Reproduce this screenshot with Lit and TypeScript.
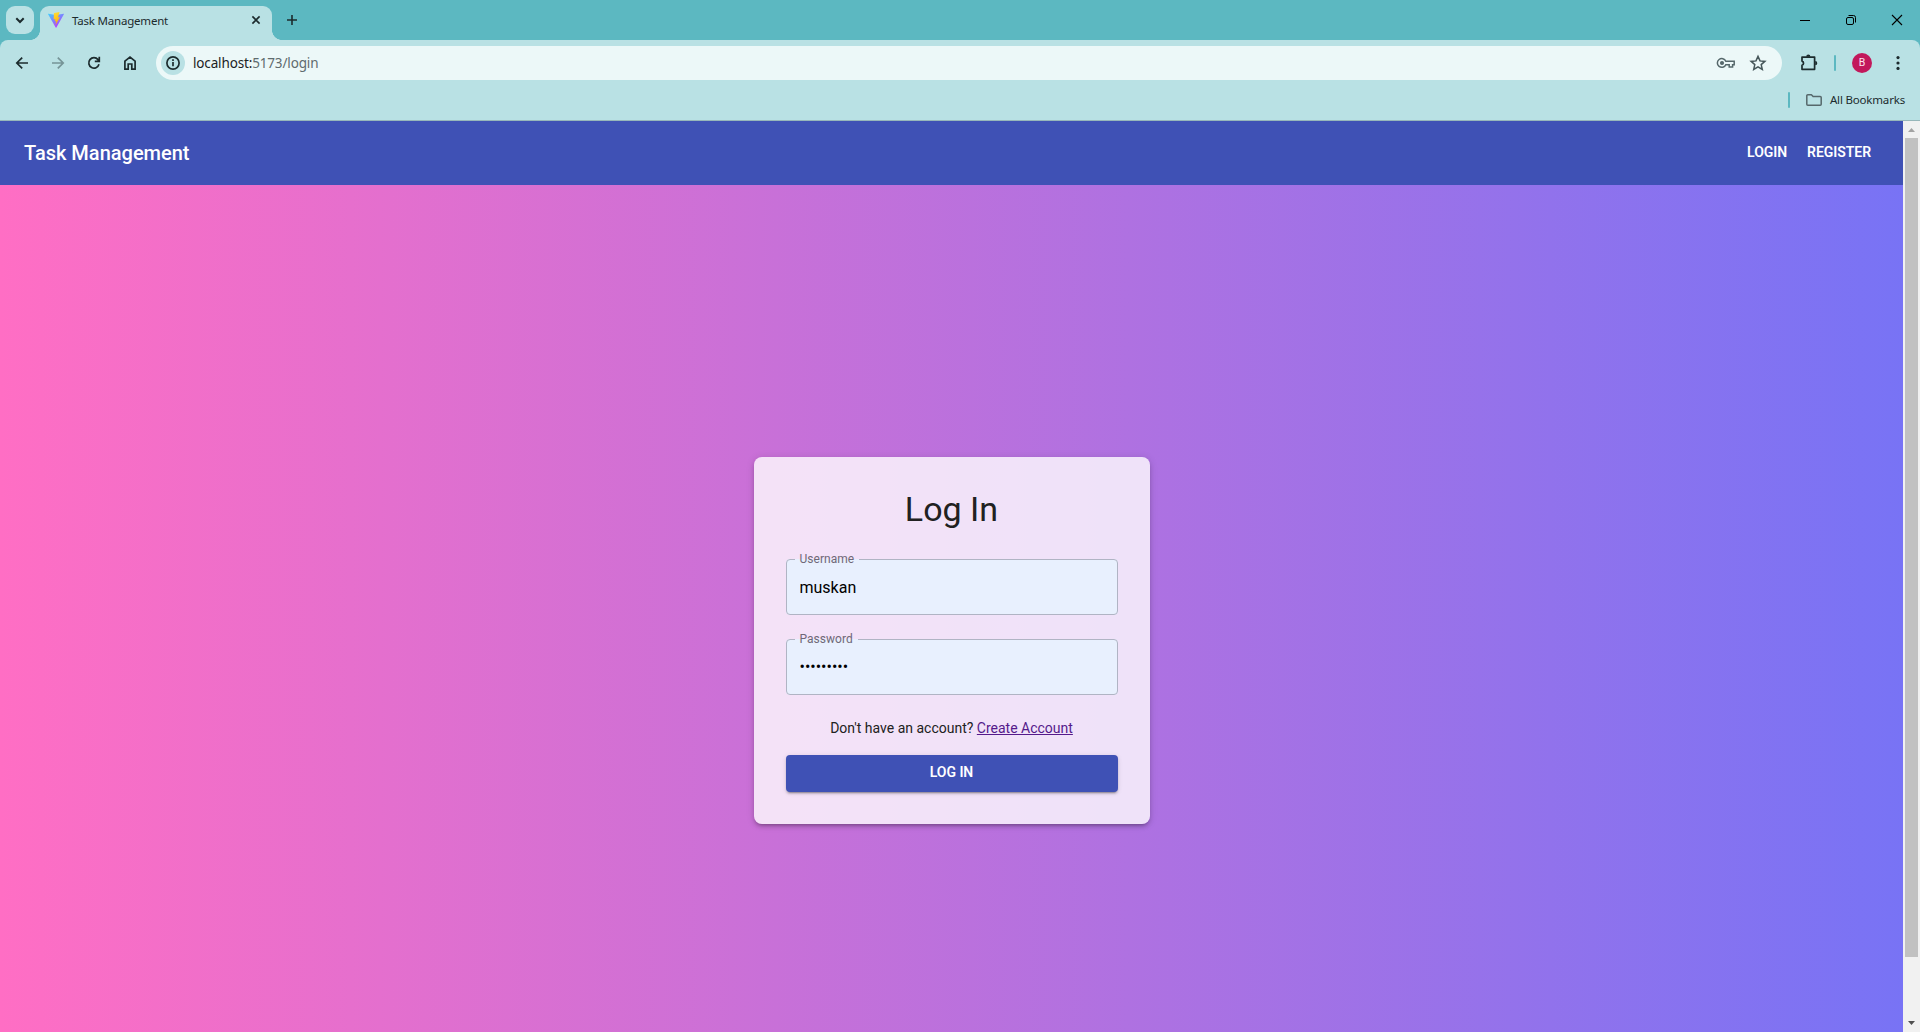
import { LitElement, html, css, svg } from "lit";
import { customElement } from "lit/decorators.js";

@customElement("browser-tabs")
class BrowserTabs extends LitElement {
  static styles = css`
    :host { display: block; height: 40px; background: #5cb8c1; font-family: "Noto Sans", sans-serif; color: #1c2b2d; }
    .strip { display: flex; height: 40px; }
    .search { width: 28px; height: 28px; margin: 6px 0 0 6px; border-radius: 9px; background: #b9e1e4; }
    .tab { position: relative; display: flex; align-items: center; width: 232px; height: 34px; margin: 6px 0 0 6px; border-radius: 9px 9px 0 0; background: #b9e1e4; box-sizing: border-box; padding: 0 8px; }
    .tab::before, .tab::after { content: ""; position: absolute; bottom: 0; width: 10px; height: 10px; }
    .tab::before { left: -10px; background: radial-gradient(circle at 0 0, transparent 9.6px, #b9e1e4 10.2px); }
    .tab::after { right: -10px; background: radial-gradient(circle at 100% 0, transparent 9.6px, #b9e1e4 10.2px); }
    .logo { margin-top: -6px; }
    .title { flex: 1; margin: -4px 0 0 8px; font-size: 11.5px; line-height: 16px; letter-spacing: -0.2px; white-space: nowrap; }
    .close { margin-top: -6px; }
    .plus { margin: 14px 0 0 14px; }
    .window { display: flex; gap: 34px; margin: 14px 17px 0 auto; }
    svg { display: block; flex: none; }
  `;
  render() {
    return html`<div class="strip">
      <div class="search"><svg width="28" height="28" fill="none" stroke="#1c2b2d" stroke-width="2"><path d="M10.3 12.3l3.7 3.7 3.7-3.7"/></svg></div>
      <div class="tab">
        <svg class="logo" width="16" height="16" viewBox="0 0 16 16">
          <defs>
            <linearGradient id="v" x1="0" y1="0" x2=".6" y2="1"><stop offset="0" stop-color="#41d1ff"/><stop offset="1" stop-color="#bd34fe"/></linearGradient>
            <linearGradient id="b" x1=".4" y1="0" x2=".6" y2="1"><stop offset="0" stop-color="#ffdd35"/><stop offset="1" stop-color="#ffa800"/></linearGradient>
          </defs>
          <path fill="url(#v)" d="M15.9 2.3L8.4 15.6a.4.4 0 0 1-.7 0L.1 2.3a.4.4 0 0 1 .4-.6L8 3l7.5-1.3a.4.4 0 0 1 .4.6z"/>
          <path fill="url(#b)" d="M11.5 0L6 1.1l-.4 6.3 1.7-.3-.5 2.4 1.4-.4-.8 4.2 4.6-8.2-2 .4z"/>
        </svg>
        <span class="title">Task Management</span>
        <svg class="close" width="16" height="16" fill="none" stroke="#1c2b2d" stroke-width="1.6"><path d="M4.4 4.4l7.2 7.2M11.6 4.4l-7.2 7.2"/></svg>
      </div>
      <svg class="plus" width="12" height="12" fill="none" stroke="#1c2b2d" stroke-width="1.6"><path d="M6 1v10M1 6h10"/></svg>
      <div class="window">
        <svg width="12" height="12" stroke="#000"><path d="M1 6.5h10"/></svg>
        <svg width="12" height="12" fill="none" stroke="#000"><rect x="1.5" y="3.5" width="7" height="7" rx="1.5"/><path d="M3.5 1.5h5a2 2 0 0 1 2 2v5"/></svg>
        <svg width="12" height="12" fill="none" stroke="#000" stroke-width="1.1"><path d="M1 1l10 10M11 1L1 11"/></svg>
      </div>
    </div>`;
  }
}

@customElement("browser-toolbar")
class BrowserToolbar extends LitElement {
  static styles = css`
    :host { display: block; height: 81px; background: #5cb8c1; font-family: "Noto Sans", sans-serif; color: #1c2b2d; }
    .panel { height: 81px; box-sizing: border-box; background: #b9e1e4; border-radius: 8px 8px 0 0; border-bottom: 1px solid #97b7ba; }
    .row { display: flex; align-items: center; height: 46px; padding-left: 14px; }
    .nav { display: flex; gap: 20px; }
    .box { display: flex; align-items: center; width: 1626px; height: 34px; box-sizing: border-box; margin-left: 18px; padding: 0 15px 0 5px; border-radius: 17px; background: #ecf8f8; }
    .info { width: 24px; height: 24px; border-radius: 50%; background: #b9e1e4; }
    .url { flex: 1; margin-left: 8px; font-size: 13.5px; line-height: 20px; color: #1c2224; letter-spacing: -0.15px; }
    .dim { color: #5f6b6e; }
    .key { margin-right: 13px; }
    .ext { margin-left: 18px; }
    .bar { width: 2px; height: 16px; border-radius: 1px; background: #5cb8c1; }
    .ext + .bar { margin-left: 14px; }
    .avatar { width: 20px; height: 20px; margin-left: 16px; border-radius: 50%; background: #c2185b; color: #fbe3ee; font: 10.5px/20px Roboto, sans-serif; text-align: center; }
    .dots { margin-left: 24px; }
    .marks { display: flex; align-items: center; justify-content: flex-end; height: 28px; padding-right: 15px; }
    .folder { margin: 0 7px 0 15px; }
    .all { font-size: 11.5px; line-height: 16px; letter-spacing: -0.18px; white-space: nowrap; }
    svg { display: block; flex: none; }
  `;
  render() {
    const nav = (g: unknown) => html`<svg width="16" height="16" fill="none" stroke="#1c2b2d" stroke-width="1.7">${g}</svg>`;
    return html`<div class="panel">
      <div class="row">
        <div class="nav">
          ${nav(svg`<path d="M14 8H3M8.2 2.6L2.8 8l5.4 5.4"/>`)}
          ${nav(svg`<path stroke="#769497" d="M2 8h11M7.8 2.6L13.2 8l-5.4 5.4"/>`)}
          ${nav(svg`<path d="M13 9.3A5.2 5.2 0 1 1 12 4.6l1.3 1.5M13.3 1.8v4.6H8.8"/>`)}
          ${nav(svg`<path d="M2.9 6.2L8 2.1l5.1 4.1v7.9H9.8V9H6.2v5.1H2.9z"/>`)}
        </div>
        <div class="box">
          <div class="info"><svg width="24" height="24" fill="none" stroke="#1c2b2d" stroke-width="1.7"><circle cx="12" cy="12" r="6.1"/><path d="M12 11v4.3M12 8.3v1.6"/></svg></div>
          <span class="url">localhost:<span class="dim">5173/login</span></span>
          <svg class="key" width="20" height="14" fill="none" stroke="#56686b" stroke-width="1.5"><path d="M9.8 5.2h8.4v3.5h-1.6v2.2h-3.4V8.7H9.8a4.4 4.4 0 1 1 0-3.5z"/><circle cx="6" cy="7" r="1.3" fill="#56686b"/></svg>
          <svg width="18" height="18" fill="none" stroke="#46575a" stroke-width="1.5"><path d="M9 2.4l2 4.5 4.9.5-3.7 3.2 1.1 4.8L9 12.9l-4.3 2.5 1.1-4.8-3.7-3.2L7 6.9z"/></svg>
        </div>
        <svg class="ext" width="20" height="20" fill="none" stroke="#1c2b2d" stroke-width="1.7"><path d="M2 4.1h12.6v12.2H2v-4a2.2 2.2 0 0 0 0-4.2z" stroke-linejoin="round"/><path fill="#1c2b2d" stroke="none" d="M6.2 3.7a2.1 2.1 0 0 1 4.2 0zM15.2 8.1a2.1 2.1 0 0 1 0 4.2z"/></svg>
        <i class="bar"></i>
        <div class="avatar">B</div>
        <svg class="dots" width="4" height="16" fill="#1c2b2d"><circle cx="2" cy="2.6" r="1.6"/><circle cx="2" cy="8" r="1.6"/><circle cx="2" cy="13.4" r="1.6"/></svg>
      </div>
      <div class="marks">
        <i class="bar"></i>
        <svg class="folder" width="18" height="14" fill="none" stroke="#56686b" stroke-width="1.5"><path stroke-linejoin="round" d="M1.8 2.8a1 1 0 0 1 1-1h3.6l1.7 1.8h7.1a1 1 0 0 1 1 1v6.6a1 1 0 0 1-1 1H2.8a1 1 0 0 1-1-1z"/></svg>
        <span class="all">All Bookmarks</span>
      </div>
    </div>`;
  }
}

@customElement("outlined-field")
class OutlinedField extends LitElement {
  static properties = { label: {}, value: {}, type: {} };
  declare label: string;
  declare value: string;
  declare type: string;
  static styles = css`
    :host { display: block; position: relative; height: 56px; font-family: Roboto, sans-serif; }
    input { display: block; width: 100%; height: 56px; box-sizing: border-box; margin: 0; padding: 0 14px; border: 0; border-radius: 4px; outline: 0; background: #e8f0fe; color: #000; font: 16px/23px Roboto, sans-serif; letter-spacing: 0; }
    input[type="password"] { padding-bottom: 2px; }
    label { position: absolute; left: 14px; top: -7px; z-index: 1; font-size: 12px; line-height: 15px; letter-spacing: 0.02px; color: #6f6877; }
    fieldset { position: absolute; inset: -5px 0 0; margin: 0; padding: 0 8px; border: 1px solid #b0b4c4; border-radius: 4px; pointer-events: none; min-width: 0; }
    legend { height: 11px; padding: 0 5px; font-size: 12px; line-height: 11px; }
    .ghost { visibility: hidden; }
  `;
  render() {
    return html`<label for="field">${this.label}</label>
      <input id="field" type=${this.type} .value=${this.value} />
      <fieldset aria-hidden="true"><legend><span class="ghost">${this.label}</span></legend></fieldset>`;
  }
}

@customElement("app-root")
class AppRoot extends LitElement {
  static styles = css`
    :host { display: block; width: 1920px; height: 1032px; overflow: hidden; font-family: Roboto, sans-serif; }
    .view { display: flex; height: 911px; overflow: hidden; }
    .page { width: 1903px; height: 911px; overflow: hidden; }
    .appbar { display: flex; align-items: center; height: 64px; box-sizing: border-box; padding: 0 32px 0 24px; background: #3f51b5; color: #fff; }
    .brand { flex: 1; font-size: 20px; line-height: 32px; font-weight: 500; }
    .links { display: flex; gap: 20px; font-size: 14px; line-height: 24px; font-weight: 600; letter-spacing: -0.05px; padding-bottom: 2px; }
    .main { display: flex; align-items: center; justify-content: center; height: 911px; background: linear-gradient(to right, #ff6ec4, #7873f5); }
    .card { width: 396px; height: 367px; box-sizing: border-box; padding: 32px; border-radius: 8px; background: rgba(255, 255, 255, 0.8); box-shadow: 0 3px 3px -2px rgba(0,0,0,.2), 0 3px 4px rgba(0,0,0,.14), 0 1px 8px rgba(0,0,0,.12); }
    h1 { margin: -1px 0 0; height: 42px; font-size: 34px; line-height: 42px; font-weight: 400; text-align: center; color: #212121; }
    .first { margin-top: 29px; }
    .second { margin-top: 24px; }
    .hint { margin: 23px 0 0; font-size: 14px; line-height: 20px; text-align: center; color: #212121; }
    .hint a { color: #551a8b; text-decoration: underline; }
    .submit { display: block; width: 100%; height: 37px; margin: 17px 0 0; padding: 0 0 3px; border: 0; border-radius: 4px; background: #3f51b5; color: #fff; font: 600 14px/24px Roboto, sans-serif; letter-spacing: -0.05px; box-shadow: 0 3px 1px -2px rgba(0,0,0,.2), 0 2px 2px rgba(0,0,0,.14), 0 1px 5px rgba(0,0,0,.12); }
    .scroll { display: flex; flex-direction: column; width: 17px; height: 911px; background: #f1f1f1; }
    .thumb { width: 13px; height: 819px; margin-left: 2px; background: #c1c1c1; }
    .down { margin-top: auto; }
    svg { display: block; }
  `;
  render() {
    return html`<browser-tabs></browser-tabs>
      <browser-toolbar></browser-toolbar>
      <div class="view">
        <div class="page">
          <div class="appbar">
            <span class="brand">Task Management</span>
            <nav class="links"><span>LOGIN</span><span>REGISTER</span></nav>
          </div>
          <div class="main">
            <div class="card">
              <h1>Log In</h1>
              <outlined-field class="first" label="Username" type="text" value="muskan"></outlined-field>
              <outlined-field class="second" label="Password" type="password" value="muskan123"></outlined-field>
              <p class="hint">Don't have an account? <a>Create Account</a></p>
              <button class="submit">LOG IN</button>
            </div>
          </div>
        </div>
        <div class="scroll">
          <svg width="17" height="17"><path fill="#a3a3a3" d="M5 11l3.5-4 3.5 4z"/></svg>
          <div class="thumb"></div>
          <svg class="down" width="17" height="17"><path fill="#505050" d="M5 6h7l-3.5 4z"/></svg>
        </div>
      </div>`;
  }
}
